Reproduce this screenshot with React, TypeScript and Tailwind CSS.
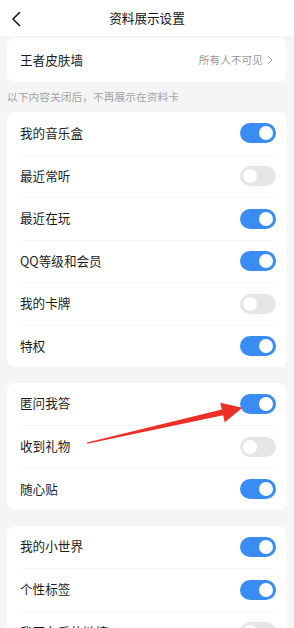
import React from "react"

type Row = { label: string; on: boolean }

const groups: Row[][] = [
  [
    { label: "我的音乐盒", on: true },
    { label: "最近常听", on: false },
    { label: "最近在玩", on: true },
    { label: "QQ等级和会员", on: true },
    { label: "我的卡牌", on: false },
    { label: "特权", on: true },
  ],
  [
    { label: "匿问我答", on: true },
    { label: "收到礼物", on: false },
    { label: "随心贴", on: true },
  ],
  [
    { label: "我的小世界", on: true },
    { label: "个性标签", on: true },
    { label: "我正在看的链接", on: false },
  ],
]

function Toggle({ on }: { on: boolean }) {
  return (
    <div
      className={`flex h-[20px] w-[36px] items-center rounded-full px-[3px] ${
        on ? "justify-end bg-[#3a8cf5]" : "justify-start bg-[#e6e6e6]"
      }`}
    >
      <div className="h-[14px] w-[14px] rounded-full bg-white" />
    </div>
  )
}

function Card({ rows }: { rows: Row[] }) {
  return (
    <div className="rounded-[8px] bg-white px-[13px]">
      {rows.map((r, i) => (
        <div
          key={r.label}
          className={`flex h-[42.5px] items-center justify-between ${
            i > 0 ? "border-t border-[#f5f5f5]" : ""
          }`}
        >
          <span className="text-[12.6px] text-[#1c1c1c]">{r.label}</span>
          <div className="mr-[-2px]">
            <Toggle on={r.on} />
          </div>
        </div>
      ))}
    </div>
  )
}

export default function App() {
  return (
    <div
      className="relative h-[628px] w-[294px] overflow-hidden bg-[#f5f5f5]"
      style={{ fontFamily: '"Noto Sans CJK SC", "Noto Sans", sans-serif' }}
    >
      {/* top bar */}
      <div className="relative flex h-[36px] items-center justify-center bg-white">
        <svg className="absolute left-[11px] top-[11px]" width="11" height="16" viewBox="0 0 11 16">
          <path d="M8.5 1.5 L2 8 L8.5 14.5" fill="none" stroke="#1a1a1a" strokeWidth="1.6" strokeLinecap="round" strokeLinejoin="round" />
        </svg>
        <span className="text-[12.6px] text-[#111]">资料展示设置</span>
      </div>

      <div className="flex flex-col px-[7px] pt-[2px]">
        <div className="flex h-[44px] items-center justify-between rounded-[8px] bg-white pl-[13px] pr-[14px]">
          <span className="text-[12.6px] text-[#1c1c1c]">王者皮肤墙</span>
          <div className="flex items-center gap-[4px]">
            <span className="text-[10.7px] text-[#9a9a9a]">所有人不可见</span>
            <svg width="6" height="10" viewBox="0 0 6 10">
              <path d="M1 1 L5 5 L1 9" fill="none" stroke="#a8a8a8" strokeWidth="1" />
            </svg>
          </div>
        </div>

        <div className="flex h-[30px] items-center">
          <span className="text-[10.75px] text-[#a3a3a3]">以下内容关闭后，不再展示在资料卡</span>
        </div>

        <div className="flex flex-col gap-[15.5px]">
          {groups.map((g, i) => (
            <Card key={i} rows={g} />
          ))}
        </div>
      </div>

      {/* annotation arrow */}
      <svg className="pointer-events-none absolute left-0 top-0" width="294" height="628" viewBox="0 0 294 628">
        <polygon
          points="87,442.6 221.8,409.5 220.3,402.7 242.5,407.8 224.7,422.2 223.2,415.3 87.3,443.8"
          fill="#ec3027"
        />
      </svg>
    </div>
  )
}
